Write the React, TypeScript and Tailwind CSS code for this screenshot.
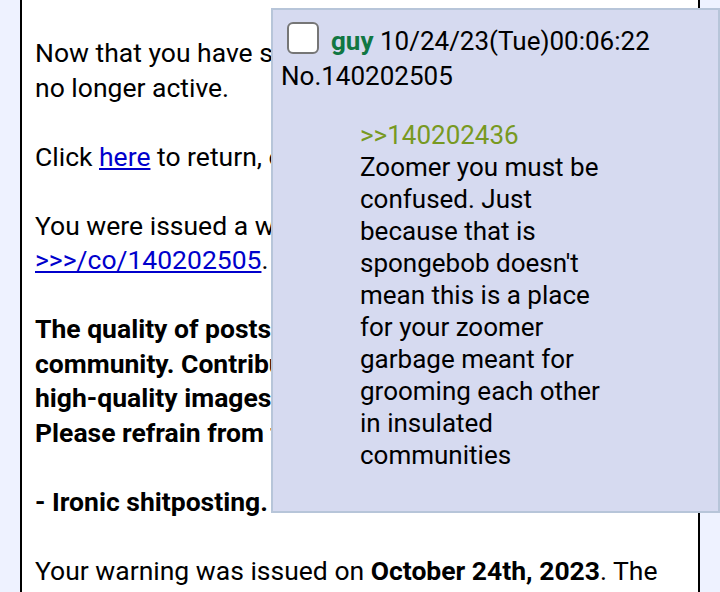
export default function App() {
  return (
    <div className="relative h-[592px] w-[720px] overflow-hidden bg-[#eef2ff] font-['Roboto',sans-serif] text-black">
      {/* warning panel */}
      <div className="ml-[20px] mr-[20px] -mt-[10px] h-[640px] border-x-2 border-black bg-white pl-[13px] pr-[10px] pt-[46px] text-[26.5px] leading-[34.5px]">
        <p>
          Now that you have seen this message, your
          <br />
          no longer active.
        </p>
        <p className="mt-[34.5px]">
          Click <a className="text-[#0000cc] underline">here</a> to return, or close this page.
        </p>
        <p className="mt-[34.5px]">
          You were issued a warning for this post:
          <br />
          <a className="text-[#0000cc] underline">&gt;&gt;&gt;/co/140202505</a>.
        </p>
        <p className="mt-[34.5px] font-bold">
          The quality of posts is important to this
          <br />
          community. Contributors are asked to
          <br />
          high-quality images and discussion.
          <br />
          Please refrain from the following:
        </p>
        <p className="mt-[34.5px] font-bold">- Ironic shitposting.</p>
        <p className="mt-[34.5px]">
          Your warning was issued on <b>October 24th, 2023</b>. The
        </p>
      </div>

      {/* hover preview of the post */}
      <div className="absolute left-[271px] top-[8px] h-[505px] w-[449px] border-2 border-[#b7c5d9] bg-[#d6daf0] pl-[8px] pt-[12px] text-[26px]">
        <div className="leading-[35px]">
          <span className="mr-[12px] ml-[6px] inline-block h-[32px] w-[32px] rounded-[6px] border-2 border-[#767676] bg-white align-[-4px]" />
          <span className="font-bold text-[#117743]">guy</span> 10/24/23(Tue)00:06:22
          <br />
          No.140202505
        </div>
        <blockquote className="ml-[79px] mt-[25px] w-[252px] leading-[32px]">
          <span className="text-[#789922]">&gt;&gt;140202436</span>
          <br />
          Zoomer you must be confused. Just because that is spongebob doesn't mean this is a place for your zoomer garbage meant for grooming each other in insulated communities
        </blockquote>
      </div>
    </div>
  );
}
